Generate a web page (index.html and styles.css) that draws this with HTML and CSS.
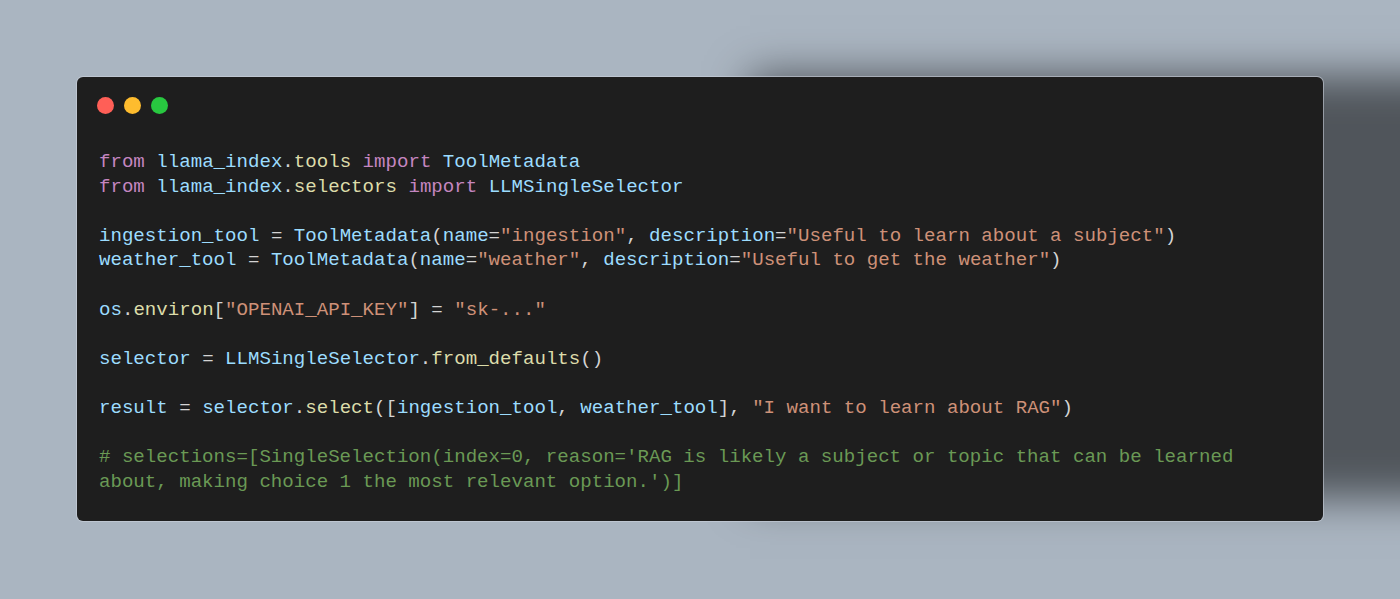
FILE: index.html
```html
<!DOCTYPE html>
<html lang="en">
<head>
<meta charset="utf-8">
<title>Code snippet</title>
<link rel="stylesheet" href="styles.css">
</head>
<body>
<div class="stage">
  <div class="window">
    <div class="titlebar">
      <span class="dot dot-red"></span>
      <span class="dot dot-yellow"></span>
      <span class="dot dot-green"></span>
    </div>
<pre class="code"><span class="kw">from</span> <span class="id">llama_index</span>.<span class="fn">tools</span> <span class="kw">import</span> <span class="id">ToolMetadata</span>
<span class="kw">from</span> <span class="id">llama_index</span>.<span class="fn">selectors</span> <span class="kw">import</span> <span class="id">LLMSingleSelector</span>

<span class="id">ingestion_tool</span> = <span class="id">ToolMetadata</span>(<span class="id">name</span>=<span class="str">"ingestion"</span>, <span class="id">description</span>=<span class="str">"Useful to learn about a subject"</span>)
<span class="id">weather_tool</span> = <span class="id">ToolMetadata</span>(<span class="id">name</span>=<span class="str">"weather"</span>, <span class="id">description</span>=<span class="str">"Useful to get the weather"</span>)

<span class="id">os</span>.<span class="fn">environ</span>[<span class="str">"OPENAI_API_KEY"</span>] = <span class="str">"sk-..."</span>

<span class="id">selector</span> = <span class="id">LLMSingleSelector</span>.<span class="fn">from_defaults</span>()

<span class="id">result</span> = <span class="id">selector</span>.<span class="fn">select</span>([<span class="id">ingestion_tool</span>, <span class="id">weather_tool</span>], <span class="str">"I want to learn about RAG"</span>)

<span class="cm"># selections=[SingleSelection(index=0, reason='RAG is likely a subject or topic that can be learned
about, making choice 1 the most relevant option.')]</span></pre>
  </div>
</div>
</body>
</html>
```

FILE: styles.css
```css
html, body {
  margin: 0;
  padding: 0;
}

body {
  background: #aab5c1;
  width: 1400px;
  height: 599px;
  overflow: hidden;
}

.stage {
  padding: 77px 0 0 77px;
}

.window {
  width: 1246px;
  height: 444px;
  box-sizing: border-box;
  background: #1e1e1e;
  border-radius: 6px;
  padding: 20px 20px 0 20px;
  box-shadow:
    0 0 0 1px rgba(205, 212, 222, 0.55),
    663px -12px 40px -10px rgba(0, 0, 0, 0.53);
}

.titlebar {
  display: flex;
  gap: 10px;
  height: 17px;
}

.dot {
  width: 17px;
  height: 17px;
  border-radius: 50%;
  display: block;
}

.dot-red { background: #ff5f57; }
.dot-yellow { background: #febc2e; }
.dot-green { background: #28c840; }

.code {
  margin: 36px 0 0 2px;
  font-family: "Liberation Mono", "Courier New", monospace;
  font-size: 19.1px;
  line-height: 24.6px;
  color: #d4d4d4;
  white-space: pre;
}

.kw { color: #c586c0; }
.id { color: #9cdcfe; }
.fn { color: #dcdcaa; }
.str { color: #ce9178; }
.cm { color: #6a9955; }
```
